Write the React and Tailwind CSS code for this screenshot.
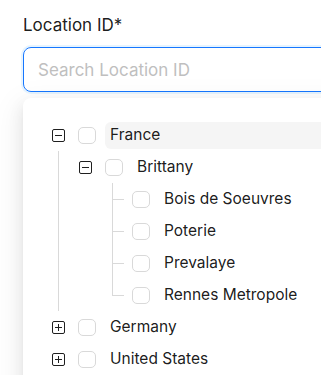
import React from 'react';

const Switcher = ({ open }) => (
    <span className="w-[27px] h-full flex items-center justify-center">
        <span className="w-[13px] h-[13px] border border-[#1f1f1f] rounded-[2px] relative bg-white">
            <span className="absolute left-[2px] right-[2px] top-[5px] h-px bg-[#1f1f1f]" />
            {!open && <span className="absolute top-[2px] bottom-[2px] left-[5px] w-px bg-[#1f1f1f]" />}
        </span>
    </span>
);

const Checkbox = () => (
    <span className="ml-[6px] w-[18px] h-[17px] border border-[#d9d9d9] rounded-[5px] bg-white shrink-0" />
);

// vertical guide line in an indent column
const Indent = ({ line }) => (
    <span className="w-[27px] h-full flex justify-center shrink-0">
        {line && <span className="w-px h-full bg-[#d9d9d9]" />}
    </span>
);

const Leaf = ({ last }) => (
    <span className="w-[27px] h-full relative shrink-0">
        <span className={`absolute left-[13px] w-px bg-[#d9d9d9] top-0 ${last ? 'h-1/2' : 'h-full'}`} />
        <span className="absolute left-[13px] top-1/2 w-[12px] h-px bg-[#d9d9d9]" />
    </span>
);

const Row = ({ children, label, active }) => (
    <div className="flex items-center h-8">
        {children}
        <Checkbox />
        <span
            className={`ml-[9px] pl-[5px] h-[27px] flex items-center flex-1 rounded-l-md ${active ? 'bg-[#f5f5f5]' : ''}`}
        >
            {label}
        </span>
    </div>
);

export default function App() {
    const children = ['Bois de Soeuvres', 'Poterie', 'Prevalaye', 'Rennes Metropole'];
    return (
        <div
            className="w-[321px] h-[375px] overflow-hidden bg-white pl-[23px] pt-[13px] text-[rgba(0,0,0,0.9)]"
            style={{ fontFamily: 'Inter, "Noto Sans", sans-serif' }}
        >
            <div className="text-[17px] leading-[24px] h-[24px]">Location ID*</div>
            <div className="mt-[10px] w-[340px] h-[45px] border border-[#1677ff] rounded-lg shadow-[0_0_0_2px_rgba(5,145,255,0.1)] flex items-center pl-[14px] pt-[2px] text-[17px] text-[#bfbfbf]">
                Search Location ID
            </div>
            <div className="mt-[6px] w-[340px] h-[300px] bg-white rounded-lg shadow-[0_6px_16px_0_rgba(0,0,0,0.08),0_3px_6px_-4px_rgba(0,0,0,0.12),0_9px_28px_8px_rgba(0,0,0,0.05)] pt-[21px] pl-[22px] text-[15.5px]">
                <Row label="France" active>
                    <Switcher open />
                </Row>
                <Row label="Brittany">
                    <Indent line />
                    <Switcher open />
                </Row>
                {children.map((c, i) => (
                    <Row key={c} label={c}>
                        <Indent line />
                        <Indent />
                        <Leaf last={i === children.length - 1} />
                    </Row>
                ))}
                <Row label="Germany">
                    <Switcher />
                </Row>
                <Row label="United States">
                    <Switcher />
                </Row>
            </div>
        </div>
    );
}
